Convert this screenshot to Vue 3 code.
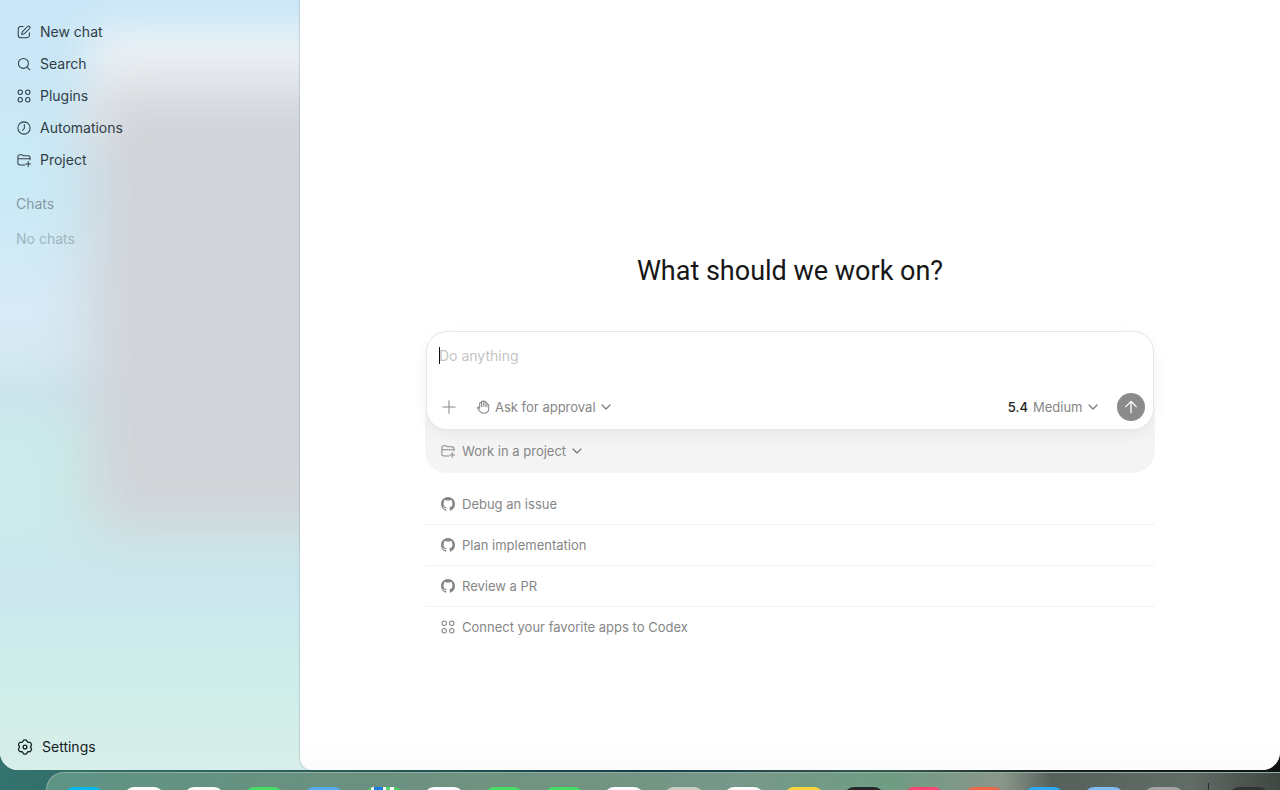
<script setup>
import { ref } from 'vue'

const navItems = [
  { label: 'New chat', icon: 'compose' },
  { label: 'Search', icon: 'search' },
  { label: 'Plugins', icon: 'grid' },
  { label: 'Automations', icon: 'clock' },
  { label: 'Project', icon: 'folder' },
]

const suggestions = [
  { label: 'Debug an issue', icon: 'github' },
  { label: 'Plan implementation', icon: 'github' },
  { label: 'Review a PR', icon: 'github' },
  { label: 'Connect your favorite apps to Codex', icon: 'grid' },
]

const dockApps = [
  'cyan', 'white', 'white', 'green', 'blue', 'maps', 'white', 'green', 'green', 'white',
  'stone', 'white', 'yellow', 'black', 'pink', 'orange', 'azure', 'sky', 'gray',
]

const prompt = ref('')
</script>

<template>
  <div class="desktop">
    <svg class="defs" aria-hidden="true">
      <symbol id="compose" viewBox="0 0 16 16">
        <path d="M7 1.800H4.400A3 3 0 0 0 1.400 4.800V11.600A3 3 0 0 0 4.400 14.600H11.200A3 3 0 0 0 14.200 11.600V9" />
        <path d="M12 1.700a1.650 1.650 0 0 1 2.400 2.300L8.900 9.600c-.8.700-1.900 1.100-3.600 1.300.2-1.700.6-2.800 1.300-3.600z" />
      </symbol>
      <symbol id="search" viewBox="0 0 16 16">
        <circle cx="7.300" cy="7.300" r="5.700" /><path d="m11.500 11.500 3.200 3.200" />
      </symbol>
      <symbol id="grid" viewBox="0 0 16 16">
        <circle cx="3.700" cy="3.700" r="2.500" /><circle cx="12.300" cy="3.700" r="2.500" />
        <circle cx="3.700" cy="12.300" r="2.500" /><circle cx="12.300" cy="12.300" r="2.500" />
      </symbol>
      <symbol id="clock" viewBox="0 0 16 16">
        <circle cx="8" cy="8" r="7" /><path d="M8.400 4v4.300L6.400 10.800" />
      </symbol>
      <symbol id="folder" viewBox="0 0 16 16">
        <path d="M8.800 13.800H3.400A2.400 2.400 0 0 1 1 11.400V4.200a2.200 2.200 0 0 1 2.200-2.200h2c1.600 0 1.700 1.200 3.200 1.200h4.200a2.300 2.300 0 0 1 2.300 2.300v2.300M1 6.500h13.800M12.800 9.800v5.600M10 12.600h5.600" />
      </symbol>
      <symbol id="gear" viewBox="0 0 16 16">
        <path d="M6.700 1.200Q8 .6 9.300 1.200L10.750 3.240 13.240 3.470Q14.400 4.300 14.540 5.730L13.500 8 14.540 10.270Q14.400 11.700 13.240 12.530L10.750 12.760 9.300 14.800Q8 15.400 6.700 14.800L5.250 12.760 2.760 12.530Q1.600 11.700 1.460 10.270L2.500 8 1.460 5.730Q1.600 4.300 2.760 3.470L5.250 3.240z" />
        <circle cx="8" cy="8" r="1.900" />
      </symbol>
      <symbol id="plus" viewBox="0 0 16 16"><path d="M8 1v14M1 8h14" /></symbol>
      <symbol id="hand" viewBox="0 0 16 16">
        <path d="M4.200 9.600V3.800a1 1 0 0 1 2 0V7.500M6.200 7V2.300a1 1 0 0 1 2.100 0V7M8.300 7V2.300a1 1 0 0 1 2.100 0V7.500M10.400 7.500V3.700a1 1 0 0 1 2.100 0V8M12.500 6a1 1 0 0 1 2.100 0v3.500c0 3.500-2.400 5.600-5.400 5.600-3 0-4.500-1.300-5.600-3.200L1.800 9.300c-.5-1.100.7-1.800 1.500-.9l.9 1.200" />
      </symbol>
      <symbol id="chevron" viewBox="0 0 10 10"><path d="m1 3 4 4 4-4" /></symbol>
      <symbol id="arrow" viewBox="0 0 16 16"><path d="M8 14.500V1.800M2 7.600 8 1.600l6 6" /></symbol>
      <symbol id="github" viewBox="0 0 16 16">
        <path fill="currentColor" stroke="none" d="M8 0C3.580 0 0 3.580 0 8c0 3.540 2.290 6.530 5.470 7.590.4.070.55-.17.55-.38 0-.19-.01-.82-.01-1.490-2.010.37-2.530-.49-2.690-.94-.09-.23-.48-.94-.82-1.130-.28-.15-.68-.52-.01-.53.63-.01 1.080.58 1.230.82.72 1.210 1.870.87 2.330.66.07-.52.28-.87.51-1.070-1.780-.2-3.640-.89-3.640-3.950 0-.87.31-1.590.82-2.150-.08-.2-.36-1.020.08-2.120 0 0 .67-.21 2.200.82.64-.18 1.320-.27 2-.27.68 0 1.360.09 2 .27 1.530-1.040 2.200-.82 2.200-.82.44 1.100.16 1.920.08 2.120.51.56.82 1.270.82 2.150 0 3.070-1.870 3.750-3.650 3.950.29.25.54.73.54 1.480 0 1.070-.01 1.930-.01 2.200 0 .21.15.46.55.38A8.013 8.013 0 0 0 16 8c0-4.420-3.580-8-8-8z" />
      </symbol>
    </svg>

    <div class="window">
      <aside class="sidebar">
        <nav class="nav">
          <button v-for="item in navItems" :key="item.label" type="button" class="nav-item">
            <svg class="icon"><use :href="'#' + item.icon" /></svg>{{ item.label }}
          </button>
        </nav>
        <h2 class="section">Chats</h2>
        <p class="empty">No chats</p>
        <button type="button" class="nav-item settings">
          <svg class="icon gear"><use href="#gear" /></svg>Settings
        </button>
      </aside>

      <main class="main">
        <div class="content">
          <h1 class="title">What should we work on?</h1>
          <div class="tray">
            <form class="composer" @submit.prevent>
              <div class="field">
                <textarea v-model="prompt" class="prompt" rows="1" aria-label="Prompt" placeholder="Do anything"></textarea>
                <span class="caret"></span>
              </div>
              <div class="toolbar">
                <button type="button" class="add" aria-label="Add"><svg class="icon"><use href="#plus" /></svg></button>
                <div class="picker">
                  <svg class="icon"><use href="#hand" /></svg>
                  <select aria-label="Approval mode"><option>Ask for approval</option></select>
                  <svg class="chevron"><use href="#chevron" /></svg>
                </div>
                <div class="picker model">
                  <label for="effort">5.4</label>
                  <select id="effort"><option>Medium</option></select>
                  <svg class="chevron"><use href="#chevron" /></svg>
                </div>
                <button type="submit" class="send" aria-label="Send"><svg class="icon"><use href="#arrow" /></svg></button>
              </div>
            </form>
            <div class="project picker">
              <svg class="icon"><use href="#folder" /></svg>
              <select aria-label="Project"><option>Work in a project</option></select>
              <svg class="chevron"><use href="#chevron" /></svg>
            </div>
          </div>
          <ul class="suggestions">
            <li v-for="item in suggestions" :key="item.label">
              <button type="button" class="suggestion">
                <svg class="icon"><use :href="'#' + item.icon" /></svg>{{ item.label }}
              </button>
            </li>
          </ul>
        </div>
      </main>
    </div>

    <div class="dock">
      <span v-for="(app, i) in dockApps" :key="i" class="app" :class="app"></span>
      <span class="divider"></span>
      <span class="app dark"></span>
    </div>
  </div>
</template>

<style>
body { margin: 0; overflow: hidden; }
</style>

<style scoped>
* { box-sizing: border-box; }
.desktop {
  height: 100vh;
  display: flex;
  flex-direction: column;
  overflow: hidden;
  font-family: Inter, "Liberation Sans", sans-serif;
  font-size: 13px;
  line-height: 20px;
  color: #868686;
  background: linear-gradient(90deg, #34736f 0, #2c5c58 25%, #173e48 50%, #35564e 70%, #1b211f 82%, #101312 100%);
}
.defs { position: absolute; width: 0; height: 0; }
button, select, textarea {
  margin: 0;
  padding: 0;
  border: 0;
  background: none;
  color: inherit;
  font: inherit;
  text-align: left;
  appearance: none;
  outline: none;
}
.icon {
  width: 14px;
  height: 14px;
  flex: none;
  fill: none;
  stroke: currentColor;
  stroke-width: 1.15;
  stroke-linecap: round;
  stroke-linejoin: round;
}
.window {
  flex: 1;
  min-height: 0;
  display: flex;
  overflow: hidden;
  border-radius: 0 0 18px 18px;
  background: #d7ede9;
}
.sidebar {
  position: relative;
  z-index: 0;
  width: 300px;
  flex: none;
  display: flex;
  flex-direction: column;
  padding: 16px 8px 7px;
  overflow: hidden;
  color: #2f3e46;
  font-size: 14px;
  background: linear-gradient(180deg, #c9e6f7 0, #caeaf6 26%, #d8ebf7 40%, #d5e9f3 46%, #cce4ed 51%, #caebea 58%, #cbebeb 65%, #cbe7ee 77%, #cdeeea 87%, #d8eee8 100%);
}
.sidebar::before,
.sidebar::after {
  content: "";
  position: absolute;
  z-index: -1;
  left: 90px;
  right: -80px;
}
.sidebar::before {
  top: 28px;
  height: 120px;
  background: #eef3f7;
  filter: blur(20px);
}
.sidebar::after {
  top: 84px;
  height: 448px;
  background: #d1d4d9;
  filter: blur(28px);
}
.nav { display: flex; flex-direction: column; }
.nav-item {
  display: flex;
  align-items: center;
  gap: 9px;
  height: 32px;
  padding: 0 9px;
}
.section, .empty {
  margin: 0;
  padding: 0 8px;
  font-size: 14px;
  font-weight: 400;
}
.section { margin-top: 18px; color: #8799a2; }
.empty { margin-top: 15px; color: #a0b4bd; }
.settings { margin-top: auto; color: #14201f; }
.gear { width: 16px; height: 16px; stroke-width: 1.3; }
.main {
  flex: 1;
  min-width: 0;
  padding: 251px 24px 0;
  border-radius: 0 0 0 12px;
  box-shadow: 0 0 2px rgba(40, 80, 100, 0.5);
  background: linear-gradient(180deg, #fff 96%, #fcfcfc 100%);
  z-index: 1;
}
.content { max-width: 730px; margin: 0 auto; }
.title {
  margin: 0 0 39px;
  font-family: Roboto, Inter, sans-serif;
  font-size: 27px;
  line-height: 40px;
  font-weight: 400;
  text-align: center;
  color: #161616;
}
.tray {
  padding: 2px;
  border-radius: 22px;
  background: linear-gradient(180deg, transparent 70px, #f4f4f4 90px);
}
.composer {
  padding: 13px 8px 8px;
  border-radius: 20px;
  background: #fff;
  box-shadow: 0 0 0 1px #e6e6e6, 0 4px 16px rgba(0, 0, 0, 0.06);
}
.field { position: relative; padding: 0 4px; }
.prompt {
  display: block;
  width: 100%;
  height: 22px;
  resize: none;
  overflow: hidden;
  font-size: 14px;
  line-height: 22px;
  color: #222;
}
.prompt::placeholder { color: #c4c4c4; opacity: 1; }
.caret {
  position: absolute;
  left: 4px;
  top: 2px;
  width: 1px;
  height: 17px;
  background: #111;
}
.toolbar { display: flex; align-items: center; margin-top: 26px; }
.add { display: flex; width: 28px; height: 28px; align-items: center; justify-content: center; }
.picker { display: flex; align-items: center; gap: 5px; }
.toolbar .picker { margin-left: 13px; }
.toolbar .model { margin-left: auto; margin-right: 19px; }
.model label { font-weight: 500; color: #222; }
.chevron {
  width: 10px;
  height: 10px;
  fill: none;
  stroke: #777;
  stroke-width: 1.2;
  stroke-linecap: round;
  stroke-linejoin: round;
  pointer-events: none;
}
.send {
  display: flex;
  align-items: center;
  justify-content: center;
  width: 28px;
  height: 28px;
  border-radius: 50%;
  background: #8b8b8b;
  color: #fff;
}
.send .icon { stroke-width: 1.5; }
.project { height: 42px; padding: 2px 14px 0; gap: 7px; }
.project .chevron { margin-left: -2px; }
.suggestions { margin: 11px 0 0; padding: 0; list-style: none; }
.suggestions li + li { border-top: 1px solid #f3f3f3; }
.suggestion {
  display: flex;
  align-items: center;
  gap: 7px;
  width: 100%;
  height: 40px;
  padding: 0 16px;
}
.dock {
  flex: none;
  display: flex;
  gap: 20px;
  height: 18px;
  margin: 2px -24px 0 46px;
  padding: 14px 0 0 17px;
  overflow: hidden;
  border-top: 1px solid #8fb0a1;
  border-left: 1px solid #8fb0a1;
  border-radius: 24px 0 0 0;
  background: linear-gradient(90deg, #5e9484 0, #6b9080 25%, #749482 45%, #77988a 55%, #6f9c83 67%, #8a958b 76%, #56615b 80%, #626c66 91%, #3e4742 98%);
}
.app { flex: none; width: 40px; height: 40px; border-radius: 10px; }
.divider { flex: none; width: 1px; height: 20px; margin: -4px 0 0 4px; background: #26302c; }
.cyan { background: #09b9ea; }
.white { background: #fcfcfc; }
.green { background: #48dc62; }
.blue { background: #55adf0; }
.maps { background: linear-gradient(90deg, #45ca60 18%, #fff 18% 24%, #167ce4 24% 48%, #fff 48% 56%, #52d467 56% 66%, #fff 66% 74%, #48cf62 74%); }
.stone { background: #cccdc1; }
.yellow { background: #f9d73b; }
.black { background: #242726; }
.pink { background: #f74470; }
.orange { background: #ee6746; }
.azure { background: #2daaf2; }
.sky { background: #7ebcf4; }
.gray { background: #a4a5a7; }
.dark { background: #303334; }
</style>
